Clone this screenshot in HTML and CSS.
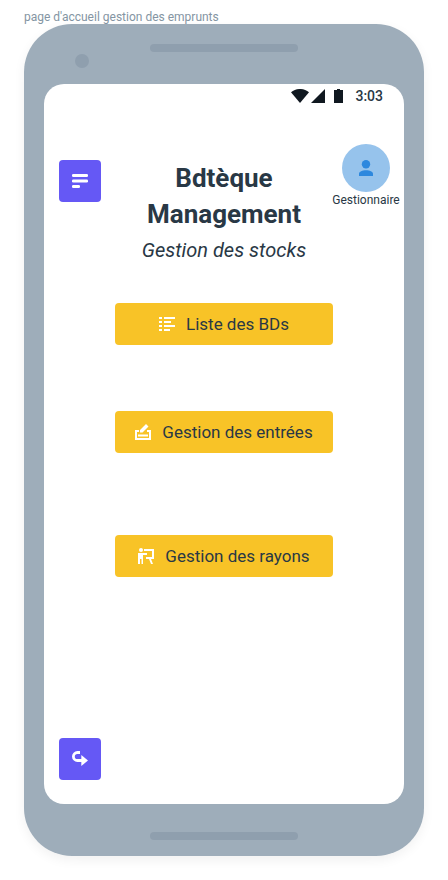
FILE: index.html
```html
<!DOCTYPE html>
<html lang="fr">
<head>
<meta charset="utf-8">
<meta name="viewport" content="width=device-width, initial-scale=1">
<title>Bdtèque Management</title>
<link rel="stylesheet" href="styles.css">
</head>
<body>
<div class="frame-name">page d'accueil gestion des emprunts</div>
<div class="phone">
  <div class="bezel bezel-top">
    <span class="camera"></span>
    <span class="speaker"></span>
  </div>
  <div class="screen">
    <div class="status">
      <svg width="18" height="14" viewBox="0 0 18 14" fill="currentColor" aria-hidden="true"><path d="M0 3.2C5-1.1 13-1.1 18 3.2L9 14z"/></svg>
      <svg class="signal" width="14" height="14" viewBox="0 0 14 14" fill="currentColor" aria-hidden="true"><path d="M14 0v14H0z"/></svg>
      <svg class="battery" width="9" height="14" viewBox="0 0 9 14" fill="currentColor" aria-hidden="true"><path d="M3 0h3v1h3v13H0V1h3z"/></svg>
      <time class="clock">3:03</time>
    </div>
    <header class="header">
      <button class="square" type="button" aria-label="Menu">
        <svg width="16" height="14" viewBox="0 0 16 14" fill="currentColor" aria-hidden="true"><rect width="16" height="3" rx="1.3"/><rect y="5.5" width="16" height="3" rx="1.3"/><rect y="11" width="8" height="3" rx="1.3"/></svg>
      </button>
      <div class="heading">
        <h1 class="title">Bdtèque Management</h1>
        <p class="subtitle">Gestion des stocks</p>
      </div>
      <div class="user">
        <span class="avatar">
          <svg width="16" height="16" viewBox="0 0 16 16" fill="currentColor" aria-hidden="true"><circle cx="8" cy="4.2" r="4.2"/><path d="M1 16v-2.2c0-2.2 3.4-3.5 7-3.5s7 1.3 7 3.5V16z"/></svg>
        </span>
        <span class="role">Gestionnaire</span>
      </div>
    </header>
    <nav class="menu">
      <button class="action" type="button">
        <svg width="16" height="14" viewBox="0 0 16 14" fill="currentColor" aria-hidden="true"><path d="M0 0h3v2H0zM0 4h3v2H0zM0 8h3v2H0zM0 12h3v2H0zM5 0h11v2H5zM5 4h7v2H5zM5 8h11v2H5zM5 12h6v2H5z"/></svg>
        Liste des BDs
      </button>
      <button class="action" type="button">
        <svg width="16" height="16" viewBox="0 0 16 16" fill="currentColor" aria-hidden="true"><path d="M0 6h4v2H2v6h12V8h-2V6h4v10H0zM3 10.500h10v2H3zM5 6l6-6 2.500 2.500L7.500 8.500H5z"/></svg>
        Gestion des entrées
      </button>
      <button class="action action-last" type="button">
        <svg width="16" height="16" viewBox="0 0 16 16" fill="currentColor" aria-hidden="true"><circle cx="3" cy="2" r="2"/><path d="M0 5h9v2H5v9H3.500v-5H2v5H0zM6 1h10v10h-3l2 5h-2l-2-5H8V9h6V3H6z"/></svg>
        Gestion des rayons
      </button>
    </nav>
    <footer class="footer">
      <button class="square" type="button" aria-label="Suivant">
        <svg width="16" height="16" viewBox="0 0 16 16" aria-hidden="true"><path d="M8 1.500H5.400a4 4 0 0 0 0 8H10" fill="none" stroke="currentColor" stroke-width="2.800"/><path d="M9.300 4l6.700 5.500L9.300 15z" fill="currentColor"/></svg>
      </button>
    </footer>
  </div>
  <div class="bezel bezel-bottom">
    <span class="speaker"></span>
  </div>
</div>
</body>
</html>
```
FILE: styles.css
```css
* {
  box-sizing: border-box;
}

body {
  margin: 0;
  padding: 8px 24px 24px;
  min-height: 100vh;
  display: flex;
  flex-direction: column;
  background: #fff;
  color: #293845;
  font-family: Roboto, "Liberation Sans", sans-serif;
}

.frame-name {
  height: 16px;
  line-height: 18px;
  font-size: 12px;
  color: #8495a3;
}

.phone {
  flex: 1;
  display: flex;
  flex-direction: column;
  padding: 0 20px;
  border-radius: 48px;
  background: #9eadba;
  box-shadow: 0 4px 12px rgba(0, 0, 0, 0.06);
}

.bezel {
  display: grid;
  grid-template-columns: 1fr 148px 1fr;
}

.bezel-top {
  height: 60px;
  padding-top: 20px;
}

.bezel-bottom {
  height: 52px;
  padding-top: 28px;
}

.speaker {
  grid-column: 2;
  grid-row: 1;
  height: 8px;
  border-radius: 4px;
  background: #8f9fae;
}

.camera {
  grid-column: 1;
  grid-row: 1;
  width: 14px;
  height: 14px;
  margin: 10px 0 0 31px;
  border-radius: 50%;
  background: #8f9fae;
}

.screen {
  flex: 1;
  display: flex;
  flex-direction: column;
  border-radius: 20px;
  background: #fff;
}

.status {
  display: flex;
  align-items: center;
  justify-content: flex-end;
  height: 24px;
  padding-right: 21px;
  color: #101820;
}

.signal {
  margin-left: 2px;
}

.battery {
  margin-left: 9px;
}

.clock {
  margin-left: 12px;
  font-size: 14px;
  font-weight: 500;
  color: #293845;
}

.header {
  display: grid;
  grid-template-columns: 72px 1fr 72px;
  align-items: start;
  margin-top: 36px;
  padding: 0 2px;
}

.square {
  display: grid;
  place-items: center;
  width: 42px;
  height: 42px;
  padding: 0;
  border: 0;
  border-radius: 4px;
  background: #6558f5;
  color: #fff;
}

.header .square {
  margin: 16px 0 0 13px;
}

.heading {
  padding-top: 16px;
  text-align: center;
}

.title {
  margin: 0;
  padding: 0 24px;
  font-size: 26px;
  font-weight: 700;
  line-height: 36px;
}

.subtitle {
  margin: 0;
  font-size: 20px;
  font-style: italic;
  line-height: 36px;
}

.user {
  display: flex;
  flex-direction: column;
  align-items: center;
}

.avatar {
  display: grid;
  place-items: center;
  width: 48px;
  height: 48px;
  border-radius: 50%;
  background: #96c3ec;
  color: #2d88de;
}

.role {
  font-size: 12px;
  line-height: 16px;
}

.menu {
  display: flex;
  flex-direction: column;
  align-items: center;
  gap: 66px;
  margin-top: 35px;
}

.action {
  display: flex;
  align-items: center;
  justify-content: center;
  gap: 11px;
  width: 218px;
  height: 42px;
  padding: 0;
  border: 0;
  border-radius: 4px;
  background: #f8c327;
  color: #293845;
  font: inherit;
  font-size: 17px;
}

.action svg {
  color: #fff;
}

.action-last {
  margin-top: 16px;
}

.footer {
  margin-top: auto;
  padding: 0 15px 24px;
}
```
